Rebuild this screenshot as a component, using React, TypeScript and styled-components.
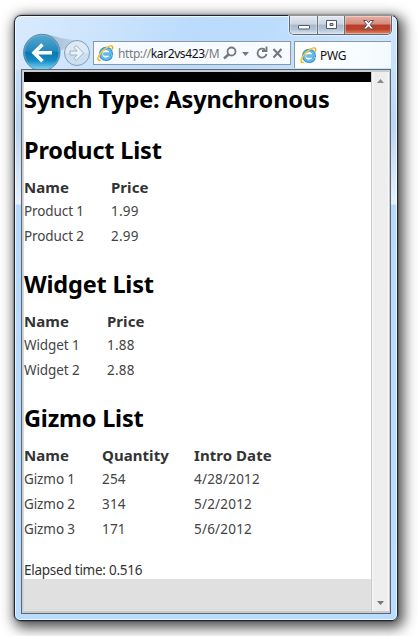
import React from "react";
import styled, { createGlobalStyle } from "styled-components";

const Global = createGlobalStyle`
  * { box-sizing: border-box; }
  body { margin: 0; background: #fff; overflow: hidden; font-family: "Noto Sans", "Open Sans", sans-serif; }
`;

const Desktop = styled.main`
  width: 418px;
  height: 636px;
  padding: 15px 0 0 14px;
  overflow: hidden;
`;

const Window = styled.div`
  width: 384px;
  height: 606px;
  border: 1px solid #1c2531;
  border-radius: 7px 7px 6px 6px;
  padding: 0 6px 6px 6px;
  display: flex;
  flex-direction: column;
  background:
    linear-gradient(115deg, #d9eafd 0, #cfe5fd 70px, #bbdbfd 170px, #bcdcfd 230px, #cfe5fb 330px, #c2dffc 400px) 0 0 / 100% 54px no-repeat,
    linear-gradient(#c6dffa 54px, #bcd5f0 110px, #e6f1fd 188px, #b7d9fc 189px, #b9dcff 100%);
  box-shadow:
    inset 0 0 0 1px rgba(255, 255, 255, 0.75),
    0 0 2px 0 rgba(0, 0, 0, 0.6),
    3px 4px 13px 3px rgba(0, 0, 0, 0.68);
`;

const Caption = styled.div`
  height: 25px;
  display: flex;
  justify-content: flex-end;
`;

const Controls = styled.div`
  display: flex;
  width: 103px;
  height: 19px;
  margin-right: -1px;
  border: 1px solid #5b6877;
  border-top: 0;
  border-radius: 0 0 5px 5px;
  overflow: hidden;
  box-shadow: 0 0 0 1px rgba(255, 255, 255, 0.5);
`;

const Control = styled.button<{ $w: number; $close?: boolean }>`
  width: ${(p) => p.$w}px;
  padding: 0;
  border: 0;
  border-right: ${(p) => (p.$close ? "0" : "1px solid #66737f")};
  display: flex;
  align-items: center;
  justify-content: center;
  background: ${(p) =>
    p.$close
      ? "linear-gradient(#e7b1a6 0, #d5897b 45%, #b83e28 50%, #bf432b 75%, #df8a6b 100%)"
      : "linear-gradient(#e3eaf2 0, #cbd5df 45%, #a9b8c9 50%, #b2c4d7 75%, #d3e3f3 100%)"};
  box-shadow: inset 0 0 0 1px rgba(255, 255, 255, 0.35);
`;

const NavBar = styled.nav`
  height: 28px;
  display: flex;
  align-items: flex-start;
`;

const NavButtons = styled.svg`
  width: 72px;
  height: 36px;
  margin-top: -8px;
  flex: none;
  display: block;
`;

const AddressBar = styled.div`
  width: 198px;
  height: 24px;
  border: 1px solid #8a98a7;
  background: #f7fbff;
  display: flex;
  align-items: center;
  flex: none;
  padding-left: 3px;
`;

const Url = styled.span`
  width: 105px;
  margin-left: 4px;
  padding-top: 1px;
  font: 12px/20px "Noto Sans", sans-serif;
  letter-spacing: -0.4px;
  color: #7b7b7b;
  white-space: nowrap;
  b { color: #111; font-weight: 400; }
`;

const AddressTools = styled.svg`
  width: 64px;
  height: 20px;
  display: block;
  flex: none;
`;

const Tab = styled.div`
  flex: 1;
  height: 27px;
  margin-left: 3px;
  border: 1px solid #8a98a7;
  border-right: 0;
  border-bottom: 0;
  background: linear-gradient(100deg, #fff 20%, #f1faff);
  display: flex;
  align-items: center;
  padding-left: 5px;
`;

const TabTitle = styled.span`
  margin-left: 3px;
  padding-top: 1px;
  font: 12px/20px "Noto Sans", sans-serif;
  letter-spacing: -0.3px;
  color: #111;
`;

const Viewport = styled.div`
  flex: 1;
  min-height: 0;
  border: 1px solid #5d6876;
  display: flex;
  padding: 2px 1px 2px 1px;
  background: #c9cbce;
`;

const Page = styled.div`
  width: 348px;
  border-left: 1px solid #d5d7da;
  background: #e0e0e0;
`;

const Body = styled.div`
  height: 507px;
  border-top: 10px solid #000;
  background: #fff;
`;

const Heading = styled.h2<{ $gap: number; $spacing: number }>`
  margin: ${(p) => p.$gap}px 0 0;
  height: 36px;
  font: 700 23.5px/36px "Noto Sans", sans-serif;
  letter-spacing: ${(p) => p.$spacing}px;
  color: #000;
  white-space: nowrap;
`;

const Grid = styled.div<{ $cols: string }>`
  display: grid;
  grid-template-columns: ${(p) => p.$cols};
  grid-auto-rows: 25px;
  margin-top: 6px;
`;

const Head = styled.span`
  height: 25px;
  font: 700 15px/27px "Noto Sans", sans-serif;
  letter-spacing: 0.05px;
  color: #333;
  white-space: nowrap;
`;

const Cell = styled.span<{ $numeric: boolean }>`
  font: 13.5px/25px "Noto Sans", sans-serif;
  letter-spacing: ${(p) => (p.$numeric ? 0.2 : -0.1)}px;
  color: #444;
  white-space: nowrap;
`;

const Elapsed = styled.p`
  margin: 16px 0 0;
  font: 13.5px/25px "Noto Sans", sans-serif;
  letter-spacing: -0.25px;
  color: #333;
`;

const Scrollbar = styled.div`
  width: 17px;
  margin-left: 1px;
  background: linear-gradient(90deg, #f5f5f5, #ededed 3px, #eee 15px, #fafafa);
  display: flex;
  flex-direction: column;
  justify-content: space-between;
  align-items: center;
  padding: 7px 0 6px;
`;

const IeLogo = () => (
  <svg width="17" height="17" viewBox="0 0 17 17" fill="none">
    <path d="M14.300 10.800c-.9 2.200-2.800 3.600-5.200 3.600-3.200 0-5.500-2.300-5.500-5.500s2.400-5.500 5.500-5.500 5.300 2.200 5.300 5.600H6.500" stroke="#3593cf" strokeWidth="3.200" />
    <path d="M13.800 10.800c-.8 2-2.500 3.100-4.700 3.100-2.900 0-5-2.100-5-5s2.100-5 5-5 4.800 2 4.800 5.100H6.500" stroke="#62bcea" strokeWidth="2" />
    <path d="M3.600 15.200C-.2 16.600.6 11 5 6.400 9.200 2 14.500-.3 15.500 1.600c.4.8.1 1.900-.5 3" stroke="#e9ad14" strokeWidth="1.500" />
    <path d="M1.500 14.200C1 12 3 8.500 5.200 6.100 8.500 2.800 12 1 14.500 1.200" stroke="#ffdc43" strokeWidth=".9" />
  </svg>
);

const Navigation = () => (
  <NavButtons viewBox="21 33 72 36">
    <defs>
      <linearGradient id="back" x1="0" y1="0" x2="0" y2="1">
        <stop offset="0" stopColor="#58a9d1" />
        <stop offset=".46" stopColor="#2489bd" />
        <stop offset=".5" stopColor="#0878b2" />
        <stop offset=".72" stopColor="#168bc4" />
        <stop offset="1" stopColor="#8be0fc" />
      </linearGradient>
      <linearGradient id="link" x1="0" y1="0" x2="1" y2="0">
        <stop offset="0" stopColor="#8fa8c0" />
        <stop offset="1" stopColor="#b9cee4" />
      </linearGradient>
    </defs>
    <path d="M44 34c9 1 16 5 31 6l-9 8-8 4z" fill="url(#link)" opacity=".75" />
    <circle cx="41.800" cy="52.500" r="18.200" fill="url(#back)" stroke="#66869d" />
    <circle cx="41.800" cy="52.500" r="17.200" stroke="#7ac3e5" strokeWidth=".7" fill="none" opacity=".7" />
    <path d="M52 52.800H34M42.500 44.500 34 52.800l8.500 8.500" stroke="#fff" strokeWidth="3.600" fill="none" />
    <circle cx="77" cy="53" r="12.500" fill="#cbdff3" stroke="#8b9dad" />
    <path d="M65.500 53a11.500 11.500 0 0 1 23 0z" fill="#dce9f6" />
    <path d="M70 51h7.200l-3.200-3.300 2.300-2.100 7.300 7.400-7.300 7.400-2.300-2.100 3.200-3.300H70z" fill="#e9f3fc" stroke="#9aabba" strokeWidth=".9" />
  </NavButtons>
);

type Row = string[];
const lists: { title: string; cols: string; gap: number; head: Row; rows: Row[] }[] = [
  { title: "Product List", cols: "87px 1fr", gap: 15, head: ["Name", "Price"], rows: [["Product 1", "1.99"], ["Product 2", "2.99"]] },
  { title: "Widget List", cols: "83px 1fr", gap: 17, head: ["Name", "Price"], rows: [["Widget 1", "1.88"], ["Widget 2", "2.88"]] },
  { title: "Gizmo List", cols: "78px 92px 1fr", gap: 17, head: ["Name", "Quantity", "Intro Date"], rows: [["Gizmo 1", "254", "4/28/2012"], ["Gizmo 2", "314", "5/2/2012"], ["Gizmo 3", "171", "5/6/2012"]] },
];

export default function App() {
  return (
    <Desktop>
      <Global />
      <Window>
        <Caption>
          <Controls>
            <Control $w={28} aria-label="Minimize">
              <svg width="14" height="12"><rect x="1.500" y="6.500" width="11" height="3.500" rx=".5" fill="#fff" stroke="#535666" /></svg>
            </Control>
            <Control $w={27} aria-label="Maximize">
              <svg width="13" height="12"><path d="M1.500 1.500h10v8h-10zM5 4.500v2h3v-2z" fill="#fff" fillRule="evenodd" stroke="#535666" /></svg>
            </Control>
            <Control $w={46} $close aria-label="Close">
              <svg width="13" height="12"><path d="M1.500 1.500h3l2 2.200 2-2.200h3L8.200 5.700l3.300 4.300h-3l-2-2.300-2 2.300h-3l3.300-4.300z" fill="#fff" stroke="#57515e" /></svg>
            </Control>
          </Controls>
        </Caption>
        <NavBar>
          <Navigation />
          <AddressBar>
            <IeLogo />
            <Url>http://<b>kar2vs423</b>/M</Url>
            <AddressTools viewBox="223 43 64 20" fill="none" stroke="#777" strokeWidth="1.800">
              <circle cx="231.500" cy="51.500" r="4" />
              <path d="m228.500 54.500-4.500 4" strokeWidth="2.400" />
              <path d="M242 52h7l-3.500 4z" fill="#777" stroke="none" />
              <path d="M265 49.700a4.500 4.500 0 1 0 1.500 4.300M266.500 46.500v4.500H262" />
              <path d="m273.500 49 8 8.500m0-8.500-8 8.500" strokeWidth="2" />
            </AddressTools>
          </AddressBar>
          <Tab>
            <IeLogo />
            <TabTitle>PWG</TabTitle>
          </Tab>
        </NavBar>
        <Viewport>
          <Page>
            <Body>
              <Heading $gap={-1} $spacing={-0.15}>Synch Type: Asynchronous</Heading>
              {lists.map((list) => (
                <React.Fragment key={list.title}>
                  <Heading $gap={list.gap} $spacing={-0.2}>{list.title}</Heading>
                  <Grid $cols={list.cols}>
                    {list.head.map((h) => <Head key={h}>{h}</Head>)}
                    {list.rows.flat().map((c) => <Cell key={c} $numeric={/^\d/.test(c)}>{c}</Cell>)}
                  </Grid>
                </React.Fragment>
              ))}
              <Elapsed>Elapsed time: 0.516</Elapsed>
            </Body>
          </Page>
          <Scrollbar>
            <svg width="7" height="4"><path d="M0 4 3.500 0 7 4z" fill="#8b8b8b" /></svg>
            <svg width="7" height="4"><path d="M0 0h7L3.500 4z" fill="#777" /></svg>
          </Scrollbar>
        </Viewport>
      </Window>
    </Desktop>
  );
}
